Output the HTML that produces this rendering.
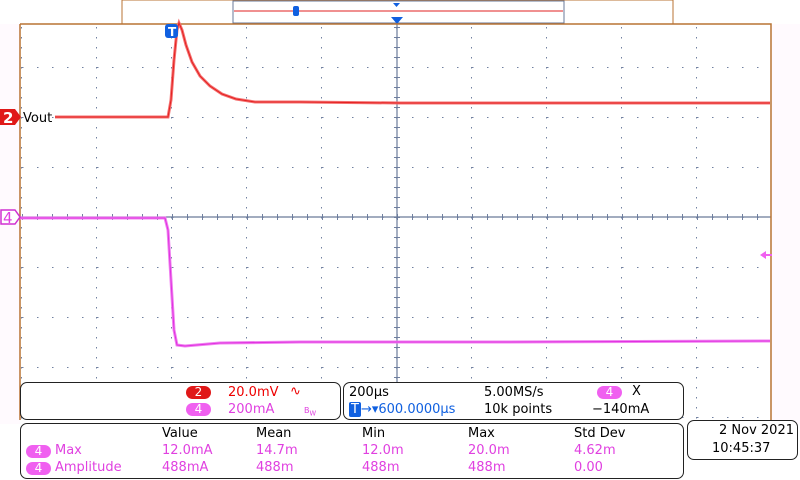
<!DOCTYPE html>
<html><head><meta charset="utf-8"><style>
body{margin:0;width:800px;height:480px;background:#fff;position:relative;overflow:hidden;font-family:"DejaVu Sans","Liberation Sans",sans-serif;}
.p{position:absolute;border:1px solid #222;border-radius:7px;background:#fff;box-sizing:border-box;}
.t{position:absolute;font-size:13px;white-space:nowrap;line-height:14px;}
.pk{color:#e040e0}.rd{color:#e00}.bl{color:#1060e0}
.pill{position:absolute;height:13px;border-radius:7px;color:#fff;font-size:12px;text-align:center;line-height:13px;}
</style></head><body>
<svg width="800" height="480" style="position:absolute;left:0;top:0">
<rect x="0" y="24" width="20" height="400" fill="#fffafe"/>
<rect x="772" y="24" width="28" height="400" fill="#fffafe"/>
<rect x="122" y="0" width="551" height="24" fill="#fff" stroke="#b87333"/>
<rect x="233" y="1" width="331" height="22" fill="#fff" stroke="#6a7a99"/>
<line x1="234" y1="11" x2="563" y2="11" stroke="#e02020"/>
<path d="M393 3h7l-3.5 4z" fill="#1060e0"/>
<rect x="293" y="6" width="6" height="10" rx="2" fill="#1060e0"/>
<g id="grid" fill="#7080a0"></g>
<line x1="20" y1="217" x2="771" y2="217" stroke="#6a7a99" stroke-width="1.2"/>
<line x1="397" y1="24" x2="397" y2="420" stroke="#6a7a99" stroke-width="1.2"/>
<path d="M391 17h12l-6 7z" fill="#1060e0"/>
<path d="M20 24H771V420" fill="none" stroke="#b87333" stroke-width="1.5"/>
<line x1="20" y1="24" x2="20" y2="420" stroke="#b87333" stroke-width="1.5"/>
<polyline fill="none" stroke="#f47070" stroke-width="3" points="55,117 168,117 171,100 174,60 177,30 179,23 182,30 186,45 192,62 200,76 210,86 222,94 236,99 255,102 300,102 400,103 500,103 600,103 700,103 770,103"/>
<polyline fill="none" stroke="#e42020" stroke-width="1" points="55,117 168,117 171,100 174,60 177,30 179,23 182,30 186,45 192,62 200,76 210,86 222,94 236,99 255,102 300,102 400,103 500,103 600,103 700,103 770,103"/>
<polyline fill="none" stroke="#f080f0" stroke-width="3" points="20,218 165,218 168,230 171,280 174,330 177,345 185,346 220,343 300,342 500,342 770,341"/>
<polyline fill="none" stroke="#e030e0" stroke-width="1" points="20,218 165,218 168,230 171,280 174,330 177,345 185,346 220,343 300,342 500,342 770,341"/>
<path d="M0 109h15l6 8-6 8H0z" fill="#e01818"/>
<text x="3" y="123" fill="#fff" font-size="15" font-family="DejaVu Sans" font-weight="bold">2</text>
<text x="23" y="122" fill="#000" font-size="13" font-family="DejaVu Sans">Vout</text>
<path d="M1 210h14l5 7-5 7H1z" fill="#fff" stroke="#d030d0" stroke-width="1.5"/>
<text x="3" y="223" fill="#e040e0" font-size="15" font-family="DejaVu Sans">4</text>
<path d="M760 255l6-4v3h6v2h-6v3z" fill="#f060f0"/>
<rect x="165" y="24" width="13" height="14" rx="3" fill="#1060e0"/>
<text x="168" y="36" fill="#fff" font-size="12" font-weight="bold" font-family="DejaVu Sans">T</text>
</svg>
<div class="p" style="left:20px;top:382px;width:321px;height:38px"></div>
<div class="pill" style="left:186px;top:386px;width:25px;background:#e01818">2</div>
<div class="t rd" style="left:228px;top:386px">20.0mV</div>
<div class="t rd" style="left:290px;top:385px">∿</div>
<div class="pill" style="left:186px;top:403px;width:25px;background:#f060f0">4</div>
<div class="t pk" style="left:228px;top:403px">200mA</div>
<div class="t pk" style="left:304px;top:404px;font-size:8px">B<sub>W</sub></div>
<div class="p" style="left:343px;top:382px;width:341px;height:38px"></div>
<div class="t" style="left:349px;top:386px">200µs</div>
<div class="t" style="left:484px;top:386px">5.00MS/s</div>
<div class="pill" style="left:597px;top:386px;width:25px;background:#f060f0">4</div>
<div class="t" style="left:632px;top:385px">X</div>
<div class="t bl" style="left:349px;top:403px"><span style="background:#1060e0;color:#fff;padding:0 2px;border-radius:2px">T</span>→▾600.0000µs</div>
<div class="t" style="left:484px;top:403px">10k points</div>
<div class="t" style="left:592px;top:403px">−140mA</div>
<div class="p" style="left:20px;top:423px;width:664px;height:56px"></div>
<div class="t" style="left:162px;top:427px">Value</div>
<div class="t" style="left:256px;top:427px">Mean</div>
<div class="t" style="left:362px;top:427px">Min</div>
<div class="t" style="left:468px;top:427px">Max</div>
<div class="t" style="left:574px;top:427px">Std Dev</div>
<div class="pill" style="left:26px;top:445px;width:25px;background:#f060f0">4</div>
<div class="t pk" style="left:55px;top:444px">Max</div>
<div class="t pk" style="left:162px;top:444px">12.0mA</div>
<div class="t pk" style="left:256px;top:444px">14.7m</div>
<div class="t pk" style="left:362px;top:444px">12.0m</div>
<div class="t pk" style="left:468px;top:444px">20.0m</div>
<div class="t pk" style="left:574px;top:444px">4.62m</div>
<div class="pill" style="left:26px;top:462px;width:25px;background:#f060f0">4</div>
<div class="t pk" style="left:55px;top:461px">Amplitude</div>
<div class="t pk" style="left:162px;top:461px">488mA</div>
<div class="t pk" style="left:256px;top:461px">488m</div>
<div class="t pk" style="left:362px;top:461px">488m</div>
<div class="t pk" style="left:468px;top:461px">488m</div>
<div class="t pk" style="left:574px;top:461px">0.00</div>
<div class="p" style="left:687px;top:420px;width:111px;height:40px"></div>
<div class="t" style="left:719px;top:424px">2 Nov 2021</div>
<div class="t" style="left:712px;top:442px">10:45:37</div>
<script>
(function(){var g=document.getElementById('grid'),s='';
for(var k=0;k<10;k++){var x=21+75*k;for(var y=27;y<420;y+=10)s+='<rect x="'+x+'" y="'+y+'" width="1" height="1.5"/>';}
for(var j=-4;j<=4;j++){var y=217+50*j;if(y<24)continue;for(var x=22;x<771;x+=15)s+='<rect x="'+x+'" y="'+y+'" width="1.5" height="1"/>';}
for(var x=22;x<771;x+=15)s+='<rect x="'+x+'" y="214" width="1" height="6"/>';
for(var y=27;y<420;y+=10)s+='<rect x="394" y="'+y+'" width="6" height="1"/>';
g.innerHTML=s;})();
</script>
</body></html>
